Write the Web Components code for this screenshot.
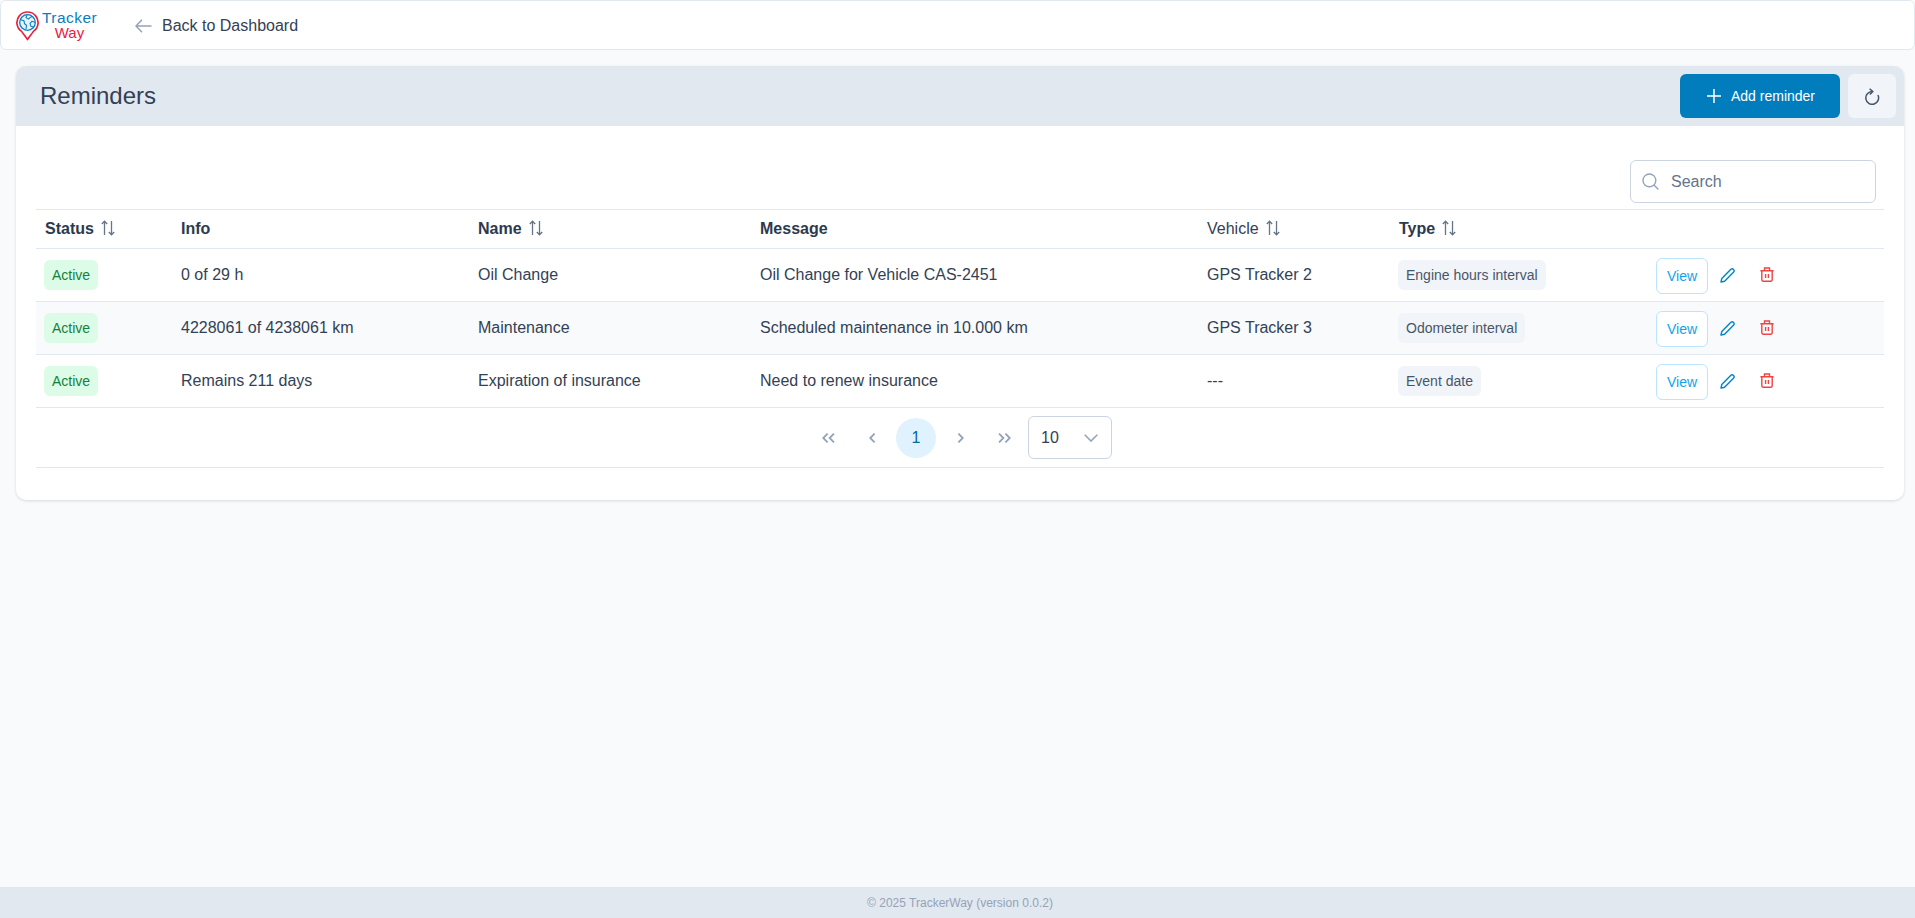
<!DOCTYPE html>
<html lang="en">
<head>
<meta charset="utf-8">
<title>Reminders</title>
<style>
  html, body { margin: 0; height: 100%; }
  body {
    display: flex;
    flex-direction: column;
    height: 918px;
    overflow: hidden;
    background: #f8fafc;
    color: #334155;
    font: 16px "Liberation Sans", Arial, sans-serif;
  }
  tk-main { flex: 1; }
</style>
</head>
<body>
  <tk-topbar></tk-topbar>
  <tk-main>
    <tk-card heading="Reminders">
      <tk-table></tk-table>
    </tk-card>
  </tk-main>
  <tk-footer>© 2025 TrackerWay (version 0.0.2)</tk-footer>

<script>
const ICONS = {
  back: `<svg width="17" height="14" viewBox="0 0 17 14" fill="none" stroke="#94a3b8" stroke-width="1.5"><path d="M16.5 7H1M7 .8 1 7l6 6.2"/></svg>`,
  plus: `<svg width="14" height="14" viewBox="0 0 14 14" fill="none" stroke="#fff" stroke-width="1.5"><path d="M7 0v14M0 7h14"/></svg>`,
  refresh: `<svg width="16" height="17" viewBox="0 0 16 17" fill="none" stroke="#475569" stroke-width="1.5"><path d="M8.2 3.5A6.4 6.4 0 1 0 13.9 7"/><path d="M5.6 .8 8.8 3.5 5.8 6.6"/></svg>`,
  search: `<svg width="17" height="17" viewBox="0 0 17 17" fill="none" stroke="#94a3b8" stroke-width="1.4"><circle cx="7.4" cy="7.4" r="6.4"/><path d="M12 12l4.4 4.4"/></svg>`,
  sort: `<svg width="14" height="16" viewBox="0 0 14 16" fill="none" stroke="#64748b" stroke-width="1.3"><path d="M3.5 15V1.2M.8 4 3.5 1.2 6.2 4M10.5 1v13.8M7.8 12l2.7 2.8 2.7-2.8"/></svg>`,
  pencil: `<svg width="15" height="15" viewBox="0 0 15 15" fill="none" stroke="#0284c7" stroke-width="1.4" stroke-linejoin="round"><path d="M10.9 1.3a2 2 0 0 1 2.8 2.8L4.6 13.2 1 14l.8-3.6z"/></svg>`,
  trash: `<svg width="14" height="15" viewBox="0 0 14 15" fill="none" stroke="#ef4444" stroke-width="1.4"><path d="M.4 3.8h13.2M4.5 3.8V1h5v2.8M1.8 3.8v9a1.4 1.4 0 0 0 1.4 1.4h7.6a1.4 1.4 0 0 0 1.4-1.4v-9M5.6 7v4M8.4 7v4"/></svg>`,
  first: `<svg width="13" height="10" viewBox="0 0 13 10" fill="none" stroke="#94a3b8" stroke-width="1.8"><path d="M5.6.6 1.2 5l4.4 4.4M12 .6 7.6 5l4.4 4.4"/></svg>`,
  prev: `<svg width="7" height="10" viewBox="0 0 7 10" fill="none" stroke="#94a3b8" stroke-width="1.8"><path d="M5.6.6 1.2 5l4.4 4.4"/></svg>`,
  next: `<svg width="7" height="10" viewBox="0 0 7 10" fill="none" stroke="#94a3b8" stroke-width="1.8"><path d="M1.4.6 5.8 5 1.4 9.4"/></svg>`,
  last: `<svg width="13" height="10" viewBox="0 0 13 10" fill="none" stroke="#94a3b8" stroke-width="1.8"><path d="M1 .6 5.4 5 1 9.4M7.4.6 11.8 5 7.4 9.4"/></svg>`,
  down: `<svg width="14" height="8" viewBox="0 0 14 8" fill="none" stroke="#94a3b8" stroke-width="1.6"><path d="M.7.8 7 7 13.3.8"/></svg>`
};

class TkLogo extends HTMLElement {
  connectedCallback () {
    this.attachShadow({ mode: "open" }).innerHTML = `
    <style>
      :host { display: flex; align-items: center; gap: 3px; width: 85px; }
      svg { flex: none; margin-top: 2px; }
      div { display: flex; flex-direction: column; align-items: center; font-family: "Liberation Sans", sans-serif; }
      span { display: block; height: 15px; line-height: 15px; }
      .a { color: #0a7ebf; font-size: 15.5px; letter-spacing: .45px; }
      .b { color: #e8213f; font-size: 15px; letter-spacing: .1px; }
    </style>
    <svg width="23" height="30" viewBox="0 0 23 30" fill="none">
      <path d="M11.5 28.5C10 26 8 24 5.6 20.4A10.6 10.6 0 1 1 17.4 20.4C15 24 13 26 11.5 28.5Z" stroke="#e8213f" stroke-width="1.7" stroke-linejoin="round"/>
      <circle cx="11.5" cy="11.5" r="7.8" stroke="#0a7ebf" stroke-width="1.3" fill="#e6f2fa"/>
      <path d="M4.5 8.8l3.5 1 .5 3 2 1.5-.5 3.5M11 4.1l-1 2.5 2.5 1.5 1.5-1.5 2-1M19 11.3l-3-1-2 2 1 3 2.5.8" stroke="#0a7ebf" stroke-width="1.1"/>
    </svg>
    <div><span class="a">Tracker</span><span class="b">Way</span></div>`;
  }
}
customElements.define("tk-logo", TkLogo);

class TkTopbar extends HTMLElement {
  connectedCallback () {
    this.attachShadow({ mode: "open" }).innerHTML = `
    <style>
      :host {
        display: flex; align-items: center; flex: none;
        box-sizing: border-box; height: 50px; padding-left: 15px;
        background: #fff; border: 1px solid #e2e8f0; border-radius: 6px;
      }
      a { display: flex; align-items: center; gap: 10px; margin-left: 34px; padding-top: 1px; color: #334155; }
    </style>
    <tk-logo></tk-logo>
    <a>${ICONS.back}<span>Back to Dashboard</span></a>`;
  }
}
customElements.define("tk-topbar", TkTopbar);

class TkMain extends HTMLElement {
  connectedCallback () {
    this.attachShadow({ mode: "open" }).innerHTML = `
    <style>:host { display: block; padding: 16px 11px 0 16px; }</style>
    <slot></slot>`;
  }
}
customElements.define("tk-main", TkMain);

class TkCard extends HTMLElement {
  connectedCallback () {
    const heading = this.getAttribute("heading");
    this.attachShadow({ mode: "open" }).innerHTML = `
    <style>
      :host { display: block; background: #fff; border-radius: 10px; box-shadow: 0 1px 3px rgba(15, 23, 42, .14); overflow: hidden; }
      header { display: flex; align-items: center; gap: 8px; height: 60px; padding: 0 8px 0 24px; background: #e2e8f0; }
      h1 { flex: 1; margin: 0; font-size: 24px; font-weight: 400; color: #334155; }
      .add, .reload { display: flex; align-items: center; justify-content: center; height: 44px; border-radius: 6px; box-sizing: border-box; }
      .add { width: 160px; gap: 10px; background: #017cbd; color: #fff; font-size: 14px; padding-left: 2px; }
      .reload { width: 48px; background: #f1f5f9; }
      section { padding: 34px 20px 32px; }
    </style>
    <header>
      <h1>${heading}</h1>
      <div class="add">${ICONS.plus}<span>Add reminder</span></div>
      <div class="reload">${ICONS.refresh}</div>
    </header>
    <section><slot></slot></section>`;
  }
}
customElements.define("tk-card", TkCard);

class TkSearch extends HTMLElement {
  connectedCallback () {
    this.attachShadow({ mode: "open" }).innerHTML = `
    <style>
      :host {
        display: flex; align-items: center; gap: 12px;
        box-sizing: border-box; width: 246px; height: 43px; padding-left: 11px;
        background: #fff; border: 1px solid #cbd5e1; border-radius: 6px; color: #64748b;
      }
    </style>
    ${ICONS.search}<span>Search</span>`;
  }
}
customElements.define("tk-search", TkSearch);

class TkBadge extends HTMLElement {
  connectedCallback () {
    const green = this.hasAttribute("green");
    this.attachShadow({ mode: "open" }).innerHTML = `
    <style>
      :host {
        display: inline-flex; align-items: center; height: 30px; padding: 0 8px;
        font-size: 14px; border-radius: 6px;
        background: ${green ? "#dcfce7" : "#f1f5f9"};
        color: ${green ? "#15803d" : "#475569"};
      }
    </style>
    <slot></slot>`;
  }
}
customElements.define("tk-badge", TkBadge);

// Las columnas se comparten entre la cabecera y las filas
const COLUMNS = "136px 297px 282px 447px 192px 257px 1fr";

class TkHeadRow extends HTMLElement {
  connectedCallback () {
    const cells = [["Status", 1, 1], ["Info", 1, 0], ["Name", 1, 1], ["Message", 1, 0], ["Vehicle", 0, 1], ["Type", 1, 1], ["", 0, 0]];
    this.attachShadow({ mode: "open" }).innerHTML = `
    <style>
      :host { display: grid; grid-template-columns: ${COLUMNS}; align-items: center; height: 40px; box-sizing: border-box; border-top: 1px solid #e2e8f0; border-bottom: 1px solid #e2e8f0; color: #2b3a4e; }
      div { display: flex; align-items: center; gap: 7px; padding-left: 9px; }
      .b { font-weight: 700; }
      .n { color: #334155; }
      svg { margin-top: -3px; }
    </style>
    ${cells.map(([t, bold, sort]) => `<div class="${bold ? "b" : "n"}">${t}${sort ? ICONS.sort : ""}</div>`).join("")}`;
  }
}
customElements.define("tk-head-row", TkHeadRow);

class TkRow extends HTMLElement {
  connectedCallback () {
    const get = (a) => this.getAttribute(a);
    this.attachShadow({ mode: "open" }).innerHTML = `
    <style>
      :host { display: grid; grid-template-columns: ${COLUMNS}; align-items: center; height: 53px; box-sizing: border-box; border-bottom: 1px solid #e2e8f0; }
      :host([alt]) { background: #f8fafc; }
      div { padding-left: 9px; }
      .badge { padding-left: 8px; }
      .actions { display: flex; align-items: center; padding-left: 9px; }
      .view { display: flex; align-items: center; justify-content: center; box-sizing: border-box; width: 52px; height: 36px; margin-top: 2px; background: #fff; border: 1px solid #bae6fd; border-radius: 6px; color: #0ea5e9; font-size: 14px; }
      .edit { margin-left: 12px; width: 15px; height: 15px; }
      .del { margin-left: 25px; width: 14px; height: 15px; margin-top: -1px; }
      svg { display: block; }
    </style>
    <div class="badge"><tk-badge green>${get("status")}</tk-badge></div>
    <div>${get("info")}</div>
    <div>${get("name")}</div>
    <div>${get("message")}</div>
    <div>${get("vehicle")}</div>
    <div class="badge"><tk-badge>${get("type")}</tk-badge></div>
    <div class="actions">
      <span class="view">View</span>
      <span class="edit">${ICONS.pencil}</span>
      <span class="del">${ICONS.trash}</span>
    </div>`;
  }
}
customElements.define("tk-row", TkRow);

class TkPager extends HTMLElement {
  connectedCallback () {
    const btn = (icon) => `<span class="btn">${icon}</span>`;
    this.attachShadow({ mode: "open" }).innerHTML = `
    <style>
      :host { display: flex; align-items: center; justify-content: center; gap: 4px; height: 60px; box-sizing: border-box; border-bottom: 1px solid #e2e8f0; }
      .btn { display: flex; align-items: center; justify-content: center; width: 40px; height: 40px; border-radius: 50%; }
      .on { background: #e0f2fe; color: #0369a1; }
      .size { display: flex; align-items: center; justify-content: space-between; box-sizing: border-box; width: 84px; height: 43px; padding: 0 13px 0 12px; border: 1px solid #cbd5e1; border-radius: 6px; color: #334155; }
    </style>
    ${btn(ICONS.first)}${btn(ICONS.prev)}<span class="btn on">1</span>${btn(ICONS.next)}${btn(ICONS.last)}
    <span class="size"><span>10</span>${ICONS.down}</span>`;
  }
}
customElements.define("tk-pager", TkPager);

class TkTable extends HTMLElement {
  connectedCallback () {
    this.attachShadow({ mode: "open" }).innerHTML = `
    <style>
      :host { display: block; }
      .tools { display: flex; justify-content: flex-end; padding: 0 8px 6px 0; }
    </style>
    <div class="tools"><tk-search></tk-search></div>
    <tk-head-row></tk-head-row>
    <tk-row status="Active" info="0 of 29 h" name="Oil Change" message="Oil Change for Vehicle CAS-2451" vehicle="GPS Tracker 2" type="Engine hours interval"></tk-row>
    <tk-row alt status="Active" info="4228061 of 4238061 km" name="Maintenance" message="Scheduled maintenance in 10.000 km" vehicle="GPS Tracker 3" type="Odometer interval"></tk-row>
    <tk-row status="Active" info="Remains 211 days" name="Expiration of insurance" message="Need to renew insurance" vehicle="---" type="Event date"></tk-row>
    <tk-pager></tk-pager>`;
  }
}
customElements.define("tk-table", TkTable);

class TkFooter extends HTMLElement {
  connectedCallback () {
    this.attachShadow({ mode: "open" }).innerHTML = `
    <style>
      :host { display: flex; align-items: center; justify-content: center; flex: none; height: 31px; padding-left: 5px; background: #e2e8f0; color: #94a3b8; font-size: 12px; }
    </style>
    <slot></slot>`;
  }
}
customElements.define("tk-footer", TkFooter);
</script>
</body>
</html>
